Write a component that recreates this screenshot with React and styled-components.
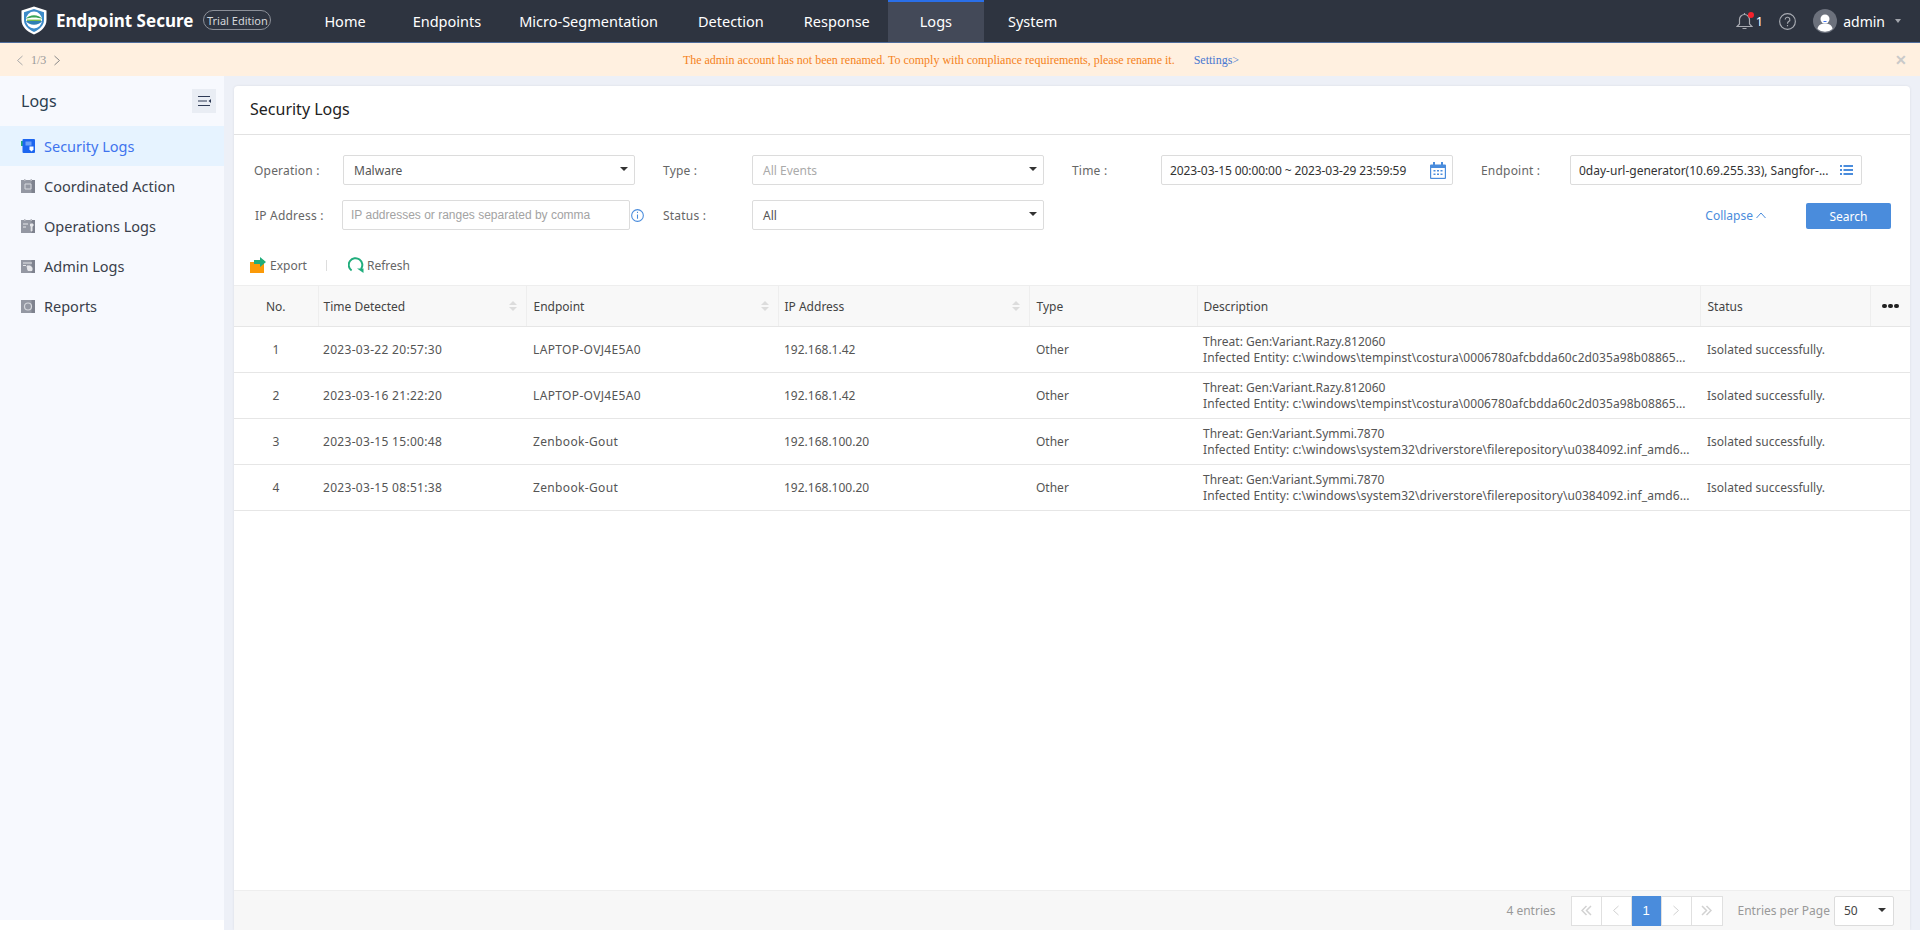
import React from 'react';
import styled, { createGlobalStyle } from 'styled-components';

const Global = createGlobalStyle`
  html, body { margin: 0; padding: 0; background: #fff; overflow: hidden; }
  body { font-family: "Noto Sans", "Noto Sans CJK SC", Arial, sans-serif; font-size: 12px; color: #555; }
  * { box-sizing: border-box; }
`;
const Page = styled.div`width: 1920px; height: 930px; display: flex; flex-direction: column; overflow: hidden;`;

const TopBar = styled.header`
  height: 43px; flex: none; display: flex; align-items: stretch; background: #2e3440;
  border-bottom: 1px solid #4f6d9c; color: #fff;
`;
const Brand = styled.div`display: flex; align-items: center; padding: 0 0 2px 21px;`;
const BrandName = styled.span`margin-left: 9px; font-size: 17px; font-weight: 700; white-space: nowrap;`;
const Edition = styled.span`
  margin-left: 10px; height: 20px; width: 68px; border: 1px solid #8b8f98; border-radius: 10px; font-size: 11px;
  display: flex; align-items: center; justify-content: center; color: #d5d7db; white-space: nowrap;
`;
const Nav = styled.nav`display: flex; margin-left: 33px;`;
const NavItem = styled.a`
  display: flex; align-items: center; font-size: 14.5px; white-space: nowrap; color: #fff;
  padding: 0 ${p => (p.$active ? 32 : 20)}px 3px; margin-right: ${p => p.$mr || 0}px;
  background: ${p => (p.$active ? '#434958' : 'transparent')};
  border-top: 2px solid ${p => (p.$active ? '#2a6fe8' : 'transparent')};
`;
const UserArea = styled.div`margin-left: auto; display: flex; align-items: center; padding-right: 18px;`;
const Bell = styled.span`position: relative; display: flex; width: 17px; height: 18px;`;
const Dot = styled.i`position: absolute; right: -1px; top: 0; width: 6px; height: 6px; border-radius: 50%; background: #f5222d;`;
const Count = styled.span`margin-left: 3px; font-size: 13px;`;
const HelpIcon = styled.span`display: flex; margin-left: 16px;`;
const Avatar = styled.span`display: flex; margin-left: 17px;`;
const UserName = styled.span`margin-left: 6px; font-size: 14px;`;
const Caret = styled.i`
  margin: 0 1px 0 10px; width: 0; height: 0; border: 3.5px solid transparent; border-top: 4px solid #a3a6ad; border-bottom: 0;
`;

const Notice = styled.div`
  height: 33px; flex: none; display: flex; align-items: center; padding-top: 1px; background: #fff0e0;
  font-family: "Liberation Serif", serif; font-size: 12px;
`;
const NoticeSide = styled.div`width: 80px; display: flex; align-items: center; padding-left: 16px; color: #999; gap: 7px; justify-content: ${p => (p.$end ? 'flex-end' : 'flex-start')}; padding-right: ${p => (p.$end ? 13 : 0)}px;`;
const NoticeBody = styled.div`flex: 1; display: flex; justify-content: center; gap: 19px; padding-left: 2px;`;
const NoticeText = styled.span`color: #f58220;`;
const NoticeLink = styled.a`color: #4a78d0;`;
const Close = styled.span`color: #c9c9c9; font-family: "Liberation Sans", sans-serif; font-size: 14px; font-weight: 700; line-height: 1;`;

const Body = styled.div`flex: 1; display: flex; min-height: 0; align-items: stretch;`;
const SideCol = styled.div`width: 224px; flex: none; display: flex; flex-direction: column; background: #fff;`;
const Sidebar = styled.aside`height: 844px; background: #f7f9fe;`;
const SideHead = styled.div`height: 50px; display: flex; align-items: center; justify-content: space-between; padding: 0 8px 0 21px;`;
const SideTitle = styled.span`font-size: 16px; color: #2c3e50;`;
const SideToggle = styled.span`width: 24px; height: 24px; background: #e9edf4; display: flex; align-items: center; justify-content: center;`;
const SideItem = styled.a`
  height: 40px; display: flex; align-items: center; gap: 9px; padding-left: 21px; font-size: 14.5px;
  color: ${p => (p.$active ? '#3f73ee' : '#3a3f4b')};
  background: ${p => (p.$active ? '#e6f3ff' : 'transparent')};
`;

const Main = styled.main`flex: 1; min-width: 0; background: #edf0f7; padding: 10px 10px 0;`;
const Card = styled.section`
  height: 100%; background: #fff; border-radius: 4px 4px 0 0; display: flex; flex-direction: column;
  box-shadow: 0 0 3px rgba(0,0,0,.08);
`;
const CardHead = styled.div`height: 49px; flex: none; display: flex; align-items: center; padding: 0 0 2px 16px; border-bottom: 1px solid #e2e2e2; font-size: 16px; color: #222;`;
const Filters = styled.div`flex: none; padding: 20px 19px 0 20px; display: flex; flex-direction: column; gap: 15px;`;
const FilterRow = styled.div`display: flex; align-items: center; height: 30px;`;
const Field = styled.div`display: flex; align-items: center; width: 381px; margin-right: 28px;`;
const Label = styled.label`
  width: ${p => p.$w || 89}px; padding-left: ${p => p.$pl || 0}px; flex: none; color: #666; font-size: 12px; white-space: nowrap; letter-spacing: .2px;
`;
const Control = styled.div`
  width: ${p => p.$w || 292}px; height: 30px; flex: none; border: 1px solid #dcdcdc; border-radius: 2px; background: #fff;
  display: flex; align-items: center; padding: 0 ${p => p.$pr || 6}px 0 ${p => p.$pl || 10}px; gap: 6px; position: relative;
  color: ${p => p.$color || '#555'}; white-space: nowrap; letter-spacing: ${p => p.$ls || 0}px;
`;
const Value = styled.span`flex: 1; min-width: 0; white-space: nowrap;`;
const Placeholder = styled.span`flex: 1; font-family: "Liberation Sans", sans-serif; color: #a3a3a3; font-size: 12px;`;
const SelectArrow = styled.i`width: 0; height: 0; border: 4px solid transparent; border-top: 4px solid #333; border-bottom: 0; flex: none; margin-bottom: 2px;`;
const InfoIcon = styled.span`display: flex; margin-left: 1px;`;
const Actions = styled.div`margin-left: auto; display: flex; align-items: center;`;
const Collapse = styled.a`color: #4a8cdc; display: flex; align-items: center; gap: 3px; margin-right: 40px;`;
const SearchBtn = styled.button`
  width: 85px; height: 26px; border: 0; border-radius: 2px; background: #4a8cdc; color: #fff; font: inherit; margin-top: 2px;
`;
const Toolbar = styled.div`flex: none; height: 40px; margin-top: 15px; display: flex; align-items: center; padding-left: 16px; color: #666;`;
const Tool = styled.a`display: flex; align-items: center; gap: ${p => p.$gap || 4}px;`;
const Sep = styled.i`width: 1px; height: 11px; background: #ddd; margin: 0 21px 0 19px;`;

const TableWrap = styled.div`flex: 1; min-height: 0;`;
const Table = styled.table`width: 100%; border-collapse: collapse; table-layout: fixed; font-size: 12px;`;
const Th = styled.th`
  height: 41px; padding: 0 6px 0 ${p => p.$pl || 6}px; background: #f8f8f8; font-weight: 400; color: #444; text-align: ${p => (p.$center ? 'center' : 'left')};
  border-top: 1px solid #eee; border-bottom: 1px solid #e6e6e6; border-right: 1px solid #eee; position: relative;
  &:last-child { border-right: 0; }
`;
const Td = styled.td`
  height: 46px; padding: 0 6px 0 ${p => p.$pl || 6}px; color: #555; border-bottom: 1px solid #e6e6e6; line-height: 16px; text-align: ${p => (p.$center ? 'center' : 'left')};
  white-space: nowrap; letter-spacing: ${p => p.$ls || 0}px;
`;
const Line = styled.div`white-space: nowrap; letter-spacing: ${p => p.$ls || 0}px;`;
const Sort = styled.span`position: absolute; right: 9px; top: 15px; display: flex; flex-direction: column; gap: 2px;`;
const SortUp = styled.i`width: 0; height: 0; border: 4px solid transparent; border-bottom: 4px solid #dcdcdc; border-top: 0;`;
const SortDown = styled.i`width: 0; height: 0; border: 4px solid transparent; border-top: 4px solid #dcdcdc; border-bottom: 0;`;
const Dots = styled.span`display: flex; justify-content: center; gap: 1.5px;`;
const DotMark = styled.i`width: 4.5px; height: 4.5px; border-radius: 50%; background: #222;`;

const Footer = styled.div`
  height: 40px; flex: none; background: #f7f7f7; border-top: 1px solid #eee; display: flex; align-items: center; justify-content: flex-end; padding-right: 16px;
`;
const Entries = styled.span`color: #999; margin-right: 15px; font-size: 12px;`;
const Pager = styled.div`display: flex; border: 1px solid #e0e0e0; height: 30px; margin-right: 15px;`;
const PageBtn = styled.span`
  width: 30px; display: flex; align-items: center; justify-content: center; font-family: "Liberation Sans", sans-serif;
  font-size: 13px; background: ${p => (p.$active ? '#4a8cdc' : '#fff')}; color: ${p => (p.$active ? '#fff' : '#ccc')};
  border-right: 1px solid #e0e0e0; margin: ${p => (p.$active ? '-1px 0' : '0')};
  &:last-child { border-right: 0; }
`;
const PerPage = styled.span`color: #999; margin-right: 4px;`;
const PerSelect = styled.div`
  width: 60px; height: 30px; border: 1px solid #dcdcdc; border-radius: 2px; background: #fff; display: flex; align-items: center;
  justify-content: space-between; padding: 0 7px 0 9px; color: #444;
`;

const Shield = () => (
  <svg width="26" height="29" viewBox="0 0 26 29">
    <path d="M13 .5 25.5 4.500V14c0 7-5.500 11.500-12.500 14.500C6 25.500.5 21 .5 14V4.500Z" fill="#fff" />
    <path d="M13 3 23 6.200V14c0 5.600-4.400 9.400-10 12C7.400 23.400 3 19.600 3 14V6.200Z" fill="#3c8bc9" />
    <ellipse cx="13" cy="14" rx="8" ry="8.500" fill="#fff" />
    <path d="M5 13c3-5 13-5 16 0-4-2-12-2-16 0Z" fill="#3aa655" />
    <path d="M5 15c4-1.500 12-1.500 16 0-3 5-13 5-16 0Z" fill="#2f7fb5" />
    <path d="M6 13.600h14v1.300H6Z" fill="#7bbf3f" />
  </svg>
);
const BellIcon = () => (
  <svg width="17" height="18" viewBox="0 0 17 18" fill="none" stroke="#a8abb2" strokeWidth="1.200">
    <path d="M1 14.500h15l-2.500-2.500V7.500a5 5 0 0 0-10 0V12Z" /><path d="M6.500 16.500h4M8.500 1v1.500" />
  </svg>
);
const Help = () => (
  <svg width="17" height="17" viewBox="0 0 16 16" fill="none" stroke="#a8abb2" strokeWidth="1.100">
    <circle cx="8" cy="8" r="7.400" /><path d="M5.800 6.200a2.200 2.200 0 1 1 3.300 1.900c-.8.500-1.100.9-1.100 1.900" /><path d="M8 11.300v1.200" />
  </svg>
);
const AvatarIcon = () => (
  <svg width="24" height="24" viewBox="0 0 24 24">
    <circle cx="12" cy="12" r="12" fill="#6c717c" /><circle cx="12" cy="10" r="4.500" fill="#fff" />
    <path d="M4.500 20c.5-4 3.500-5.500 7.500-5.500s7 1.500 7.500 5.500a11.500 11.500 0 0 1-15 0Z" fill="#fff" />
    <path d="M10.500 12.500h3" stroke="#3f73ee" strokeWidth="1" />
  </svg>
);
const Chevron = ({ dir = 'left', color = '#999', size = 8 }) => (
  <svg width={size} height={size + 3} viewBox="0 0 8 11" fill="none" stroke={color} strokeWidth="1">
    <path d={dir === 'left' ? 'M6.500 1 1.500 5.500 6.500 10' : 'M1.500 1 6.500 5.500 1.500 10'} />
  </svg>
);
const DoubleChevron = ({ dir = 'left' }) => (
  <svg width="11" height="11" viewBox="0 0 11 11" fill="none" stroke="#d2d2d2" strokeWidth="1.500">
    <path d={dir === 'left' ? 'M5.500 1 1 5.500 5.500 10M10 1 5.500 5.500 10 10' : 'M1 1l4.500 4.500L1 10M5.500 1 10 5.500 5.500 10'} />
  </svg>
);
const ToggleIcon = () => (
  <svg width="13" height="10" viewBox="0 0 13 10" fill="none" stroke="#2e3a55" strokeWidth="1">
    <path d="M0 .5h12M0 5h9M0 9.500h12" /><path d="M13 3v4l-2.500-2Z" fill="#2e3a55" stroke="none" />
  </svg>
);
const SecurityIcon = () => (
  <svg width="14" height="14" viewBox="0 0 14 14">
    <rect x="0" y="2" width="3" height="5" fill="#25b07a" /><rect x="1.500" y="0" width="12.500" height="14" rx="1" fill="#1d66f0" />
    <rect x="4.500" y="2.500" width="6" height="4" fill="#6ea1f7" /><path d="M8.500 7.500h4v3l-2 2-2-2Z" fill="#fff" />
  </svg>
);
const GrayIcon = ({ kind }) => (
  <svg width="14" height="14" viewBox="0 0 14 14">
    <rect x="0" y="1" width="14" height="13" fill="#9498a3" />
    <rect x="10.500" y="1" width="3.500" height="13" fill="#7e828e" />
    {(kind === 'ops' || kind === 'coord') && <path d="M3 0h1.500v2H3ZM9.500 0H11v2H9.500Z" fill="#b8bac2" />}
    {kind === 'coord' && <path d="M4 5h6v5H4Z" fill="none" stroke="#d6d8dd" strokeWidth="1" />}
    {kind === 'ops' && <path d="M2 5h5M2 8h3M9.500 5h2.500v2h-1v5h-.800V7h-.7Z" stroke="#e6e7ea" strokeWidth="1" fill="#e6e7ea" />}
    {kind === 'admin' && <path d="M2 4h9M2 6.500h3M6 7h3l2 1.500v3H7Z" stroke="#e6e7ea" strokeWidth="1" fill="#e6e7ea" />}
    {kind === 'report' && <circle cx="7" cy="7.500" r="3.500" fill="none" stroke="#d6d8dd" strokeWidth="1.200" />}
  </svg>
);
const ExportIcon = () => (
  <svg width="16" height="16" viewBox="0 0 16 16">
    <path d="M0 5h9v-2h5V16H0Z" fill="#fb9a08" /><path d="M4 3h6V0l6 5-6 5V7H4Z" fill="#20ad7c" />
  </svg>
);
const RefreshIcon = () => (
  <svg width="16" height="16" viewBox="0 0 16 16" fill="none">
    <path d="M3.600 13.500A6.800 6.800 0 1 1 13 12" stroke="#20ad7c" strokeWidth="2" /><path d="M9 11.500h6.500V16Z" fill="#20ad7c" />
  </svg>
);
const Info = () => (
  <svg width="13" height="13" viewBox="0 0 12 12" fill="none" stroke="#4a8cdc" strokeWidth="1">
    <circle cx="6" cy="6" r="5.400" /><path d="M6 5v4M6 2.600v1.200" />
  </svg>
);
const Calendar = () => (
  <svg width="16" height="17" viewBox="0 0 16 17">
    <path d="M1 2.500h14a1 1 0 0 1 1 1V16a1 1 0 0 1-1 1H1a1 1 0 0 1-1-1V3.500a1 1 0 0 1 1-1Z" fill="#4a8cdc" />
    <rect x="3" y="0" width="2" height="4" fill="#4a8cdc" /><rect x="11" y="0" width="2" height="4" fill="#4a8cdc" />
    <rect x="1.200" y="6" width="13.600" height="9.800" fill="#fff" />
    <path d="M3.500 8h2v1.500h-2ZM7 8h2v1.500H7ZM10.500 8h2v1.500h-2ZM3.500 11.500h2V13h-2ZM7 11.500h2V13H7ZM10.500 11.500h2V13h-2Z" fill="#4a8cdc" />
  </svg>
);
const ListIcon = () => (
  <svg width="13" height="12" viewBox="0 0 13 12" fill="#4a8cdc">
    <path d="M0 1h2v2H0ZM0 5h2v2H0ZM0 9h2v2H0ZM3.500 1H13v2H3.500ZM3.500 5H13v2H3.500ZM3.500 9H13v2H3.500Z" />
  </svg>
);
const UpChevron = () => (
  <svg width="10" height="7" viewBox="0 0 10 7" fill="none" stroke="#4a8cdc" strokeWidth="1"><path d="M.5 6 5 1l4.500 5" /></svg>
);

const navItems = [['Home', 7], ['Endpoints', -2], ['Micro-Segmentation'], ['Detection'], ['Response', -2], ['Logs', 4, true], ['System']];
const sideItems = [
  ['Security Logs', <SecurityIcon key="s" />, true],
  ['Coordinated Action', <GrayIcon key="c" kind="coord" />],
  ['Operations Logs', <GrayIcon key="o" kind="ops" />],
  ['Admin Logs', <GrayIcon key="a" kind="admin" />],
  ['Reports', <GrayIcon key="r" kind="report" />],
];
const columns = [
  { t: 'No.', w: 84, center: true },
  { t: 'Time Detected', w: 208, sort: true, pl: 5 },
  { t: 'Endpoint', w: 252, sort: true, pl: 7 },
  { t: 'IP Address', w: 251, sort: true, pl: 6 },
  { t: 'Type', w: 168, pl: 7 },
  { t: 'Description', w: 503, pl: 6 },
  { t: 'Status', w: 170, pl: 7 },
  { t: null, w: 40 },
];
const razy = ['Threat: Gen:Variant.Razy.812060', 'Infected Entity: c:\\windows\\tempinst\\costura\\0006780afcbdda60c2d035a98b08865...'];
const symmi = ['Threat: Gen:Variant.Symmi.7870', 'Infected Entity: c:\\windows\\system32\\driverstore\\filerepository\\u0384092.inf_amd6...'];
const rows = [
  [1, '2023-03-22 20:57:30', 'LAPTOP-OVJ4E5A0', '192.168.1.42', razy],
  [2, '2023-03-16 21:22:20', 'LAPTOP-OVJ4E5A0', '192.168.1.42', razy],
  [3, '2023-03-15 15:00:48', 'Zenbook-Gout', '192.168.100.20', symmi],
  [4, '2023-03-15 08:51:38', 'Zenbook-Gout', '192.168.100.20', symmi],
];

export default function App() {
  return (
    <Page>
      <Global />
      <TopBar>
        <Brand>
          <Shield />
          <BrandName>Endpoint Secure</BrandName>
          <Edition>Trial Edition</Edition>
        </Brand>
        <Nav>
          {navItems.map(([t, mr, active]) => <NavItem key={t} $mr={mr} $active={active}>{t}</NavItem>)}
        </Nav>
        <UserArea>
          <Bell><BellIcon /><Dot /></Bell>
          <Count>1</Count>
          <HelpIcon><Help /></HelpIcon>
          <Avatar><AvatarIcon /></Avatar>
          <UserName>admin</UserName>
          <Caret />
        </UserArea>
      </TopBar>
      <Notice>
        <NoticeSide><Chevron dir="left" color="#aaa" /><span>1/3</span><Chevron dir="right" color="#888" /></NoticeSide>
        <NoticeBody>
          <NoticeText>The admin account has not been renamed. To comply with compliance requirements, please rename it.</NoticeText>
          <NoticeLink>Settings&gt;</NoticeLink>
        </NoticeBody>
        <NoticeSide $end><Close>✕</Close></NoticeSide>
      </Notice>
      <Body>
        <SideCol>
          <Sidebar>
            <SideHead><SideTitle>Logs</SideTitle><SideToggle><ToggleIcon /></SideToggle></SideHead>
            {sideItems.map(([t, icon, active]) => <SideItem key={t} $active={active}>{icon}<span>{t}</span></SideItem>)}
          </Sidebar>
        </SideCol>
        <Main>
          <Card>
            <CardHead>Security Logs</CardHead>
            <Filters>
              <FilterRow>
                <Field><Label>Operation :</Label><Control><Value>Malware</Value><SelectArrow /></Control></Field>
                <Field><Label>Type :</Label><Control $color="#aaa"><Value>All Events</Value><SelectArrow /></Control></Field>
                <Field><Label>Time :</Label><Control $color="#333" $pl={8} $pr={6} $ls={-0.09}><Value>2023-03-15 00:00:00 ~ 2023-03-29 23:59:59</Value><Calendar /></Control></Field>
                <Field><Label>Endpoint :</Label><Control $color="#333" $pl={8} $pr={8}><Value>0day-url-generator(10.69.255.33), Sangfor-...</Value><ListIcon /></Control></Field>
              </FilterRow>
              <FilterRow>
                <Field><Label $w={88} $pl={1}>IP Address :</Label><Control $w={288} $pl={8}><Placeholder>IP addresses or ranges separated by comma</Placeholder></Control><InfoIcon><Info /></InfoIcon></Field>
                <Field><Label>Status :</Label><Control><Value>All</Value><SelectArrow /></Control></Field>
                <Actions>
                  <Collapse>Collapse <UpChevron /></Collapse>
                  <SearchBtn>Search</SearchBtn>
                </Actions>
              </FilterRow>
            </Filters>
            <Toolbar>
              <Tool><ExportIcon />Export</Tool>
              <Sep />
              <Tool $gap={3}><RefreshIcon />Refresh</Tool>
            </Toolbar>
            <TableWrap>
              <Table>
                <colgroup>{columns.map((c, i) => <col key={i} width={c.w} />)}</colgroup>
                <thead>
                  <tr>
                    {columns.map((c, i) => (
                      <Th key={i} $center={c.center} $pl={c.pl}>
                        {c.t || <Dots><DotMark /><DotMark /><DotMark /></Dots>}
                        {c.sort && <Sort><SortUp /><SortDown /></Sort>}
                      </Th>
                    ))}
                  </tr>
                </thead>
                <tbody>
                  {rows.map(([n, time, ep, ip, desc]) => (
                    <tr key={n}>
                      <Td $center>{n}</Td>
                      <Td $pl={5} $ls={0.3}>{time}</Td>
                      <Td $pl={7} $ls={0.35}>{ep}</Td>
                      <Td>{ip}</Td>
                      <Td $pl={7}>Other</Td>
                      <Td $pl={6}><Line>{desc[0]}</Line><Line $ls={0.08}>{desc[1]}</Line></Td>
                      <Td $pl={7}>Isolated successfully.</Td>
                      <Td />
                    </tr>
                  ))}
                </tbody>
              </Table>
            </TableWrap>
            <Footer>
              <Entries>4 entries</Entries>
              <Pager>
                <PageBtn><DoubleChevron dir="left" /></PageBtn>
                <PageBtn><Chevron dir="left" color="#d2d2d2" /></PageBtn>
                <PageBtn $active>1</PageBtn>
                <PageBtn><Chevron dir="right" color="#d2d2d2" /></PageBtn>
                <PageBtn><DoubleChevron dir="right" /></PageBtn>
              </Pager>
              <PerPage>Entries per Page</PerPage>
              <PerSelect><span>50</span><SelectArrow /></PerSelect>
            </Footer>
          </Card>
        </Main>
      </Body>
    </Page>
  );
}
